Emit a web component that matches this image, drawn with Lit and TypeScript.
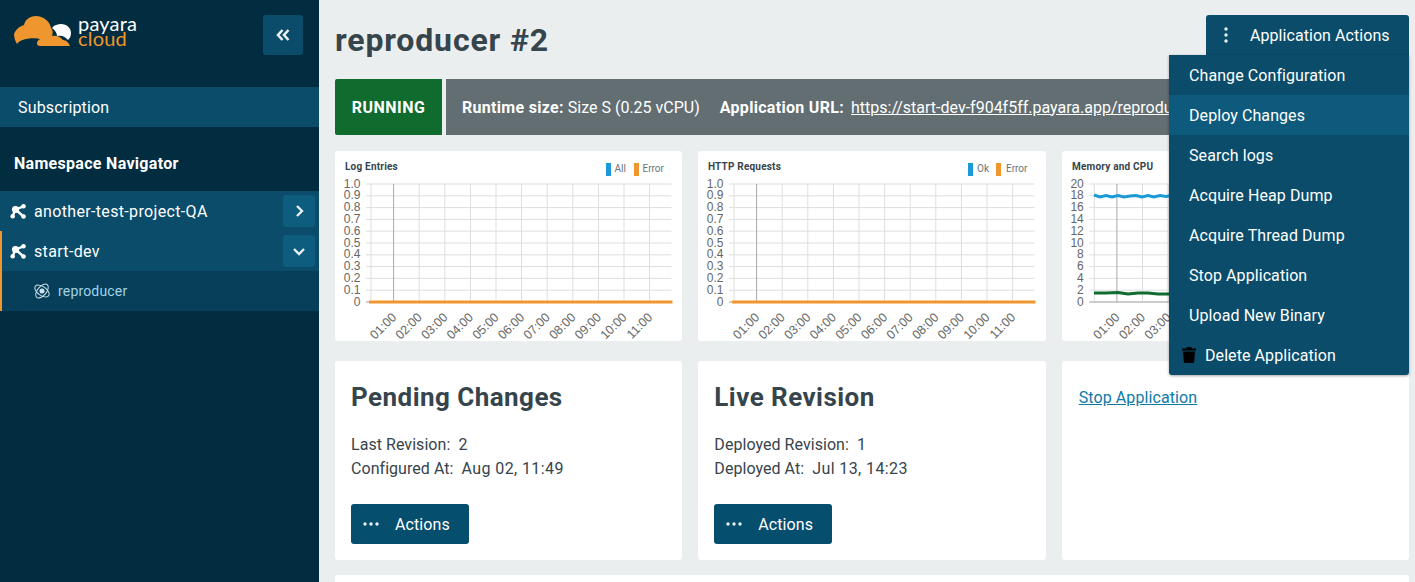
import { LitElement, html, svg, css } from 'lit';
import { customElement, property } from 'lit/decorators.js';

const TIMES = ['01:00', '02:00', '03:00', '04:00', '05:00', '06:00', '07:00', '08:00', '09:00', '10:00', '11:00'];

const clusterIcon = html`<svg class="cluster" viewBox="0 0 16 16" width="16" height="16">
  <path d="M5.500 6.500L2.700 13M5.500 6.500L13.500 3.300M5.500 6.500L13.500 13.500" stroke="currentColor" stroke-width="2.400" fill="none"/>
  <circle cx="5.500" cy="6.500" r="3.600" fill="currentColor"/>
  <circle cx="2.700" cy="13.300" r="2.300" fill="currentColor"/>
  <circle cx="13.500" cy="3.300" r="2.300" fill="currentColor"/>
  <circle cx="13.500" cy="13.500" r="2.300" fill="currentColor"/>
</svg>`;

const atomIcon = html`<svg viewBox="0 0 18 18" width="18" height="18" fill="none" stroke="#cfe3ec" stroke-width="1">
  <ellipse cx="9" cy="9" rx="8.200" ry="4.400" transform="rotate(35 9 9)"/>
  <ellipse cx="9" cy="9" rx="8.200" ry="4.400" transform="rotate(-50 9 9)"/>
  <circle cx="9" cy="9" r="2.500" fill="#cfe3ec" stroke="none"/>
</svg>`;

@customElement('usage-chart')
class UsageChart extends LitElement {
  @property() title = '';
  @property({ type: Array }) legend: string[] = [];
  @property({ type: Array }) labels: string[] = [];
  @property({ type: Number }) startX = 36;
  @property({ type: Boolean }) live = false;

  static styles = css`
    :host { display: block; background: #fff; border-radius: 3px; height: 190px; overflow: hidden; }
    svg { display: block; }
    text { font-family: 'Liberation Sans', Arial, sans-serif; }
    .title { font-family: Roboto, sans-serif; font-size: 10px; font-weight: 700; fill: #36444c; letter-spacing: .2px; }
    .leg { font-family: Roboto, sans-serif; font-size: 10px; fill: #6b7478; }
    .ylab { font-size: 12px; fill: #666; text-anchor: end; }
    .xlab { font-size: 12.500px; fill: #666; text-anchor: end; }
  `;

  render() {
    const x0 = this.startX;
    const top = 33;
    const bottom = 151;
    const step = (bottom - top) / (this.labels.length - 1);
    const tickAt = (i: number) => x0 + 22.6 + i * 25.6;
    const right = x0 + 300.5;
    const first = this.legend[0] === 'All';
    return html`<svg width="347" height="190">
      <text class="title" x="10" y="19">${this.title}</text>
      ${this.legend.length ? svg`
        <rect x="${first ? 271 : 270}" y="12" width="5" height="13" fill="#1b9ad6"/>
        <text class="leg" x="${first ? 279.500 : 279}" y="21">${this.legend[0]}</text>
        <rect x="${first ? 299 : 298}" y="12" width="5" height="13" fill="#f0962e"/>
        <text class="leg" x="${first ? 307.500 : 308}" y="21">Error</text>` : ''}
      ${this.labels.map((l, i) => svg`
        <line x1="${x0 - 5}" x2="${right}" y1="${top + i * step}" y2="${top + i * step}" stroke="#dedede"/>
        <text class="ylab" x="${x0 - 10.500}" y="${top + i * step + 3.500}">${l}</text>`)}
      <line x1="${x0}" x2="${x0}" y1="${top}" y2="${bottom}" stroke="#dedede"/>
      ${TIMES.map((t, i) => svg`
        <line x1="${tickAt(i)}" x2="${tickAt(i)}" y1="${top}" y2="${bottom}" stroke="${i === 0 ? '#a8a8a8' : '#dedede'}"/>
        <text class="xlab" transform="translate(${tickAt(i) + 3.500} ${bottom + 16}) rotate(-45)">${t}</text>`)}
      <line x1="${x0 - 5}" x2="${right}" y1="${bottom}" y2="${bottom}" stroke="#aaa"/>
      ${this.live ? svg`
        <polyline fill="none" stroke="#1b9ad6" stroke-width="3" points="32,44 38,46 44,44.500 50,46 56,44.500 62,46 68,45 74,44.500 80,46 86,44.500 92,46 98,44.500 104,45.500 110,44.500"/>
        <polyline fill="none" stroke="#0f6b2e" stroke-width="3" points="32,142 44,142 56,141.500 66,143 76,142 86,142 96,143 110,143"/>
      ` : svg`
        <line x1="${x0 - 2}" x2="${right + 1}" y1="${bottom}" y2="${bottom}" stroke="#f0962e" stroke-width="3"/>`}
    </svg>`;
  }
}

@customElement('app-root')
class AppRoot extends LitElement {
  static styles = css`
    :host {
      display: flex; height: 582px; overflow: hidden; position: relative;
      font-family: Roboto, sans-serif; font-size: 16px; color: #36444c; background: #ebeeef;
    }
    a { color: inherit; }
    button { font: inherit; color: inherit; border: 0; cursor: pointer; }

    .side { width: 319px; flex: none; background: #022c3f; color: #fff; }
    .brand { height: 87px; box-sizing: border-box; padding: 15px 16px 0 14px; display: flex; justify-content: space-between; align-items: flex-start; }
    .logo { display: flex; gap: 7px; }
    .logo-text { display: flex; flex-direction: column; font-family: Lato, sans-serif; font-weight: 400; font-size: 20px; line-height: 15px; margin-top: 1px; letter-spacing: .2px; }
    .logo-text span:last-child { color: #f0962e; }
    .collapse { width: 40px; height: 40px; border-radius: 3px; background: #0a4c6a; display: grid; place-items: center; padding: 0; }
    .sub { height: 40px; background: #0a4c6a; display: flex; align-items: center; padding-left: 18px; letter-spacing: .17px; }
    .nav-title { height: 64px; box-sizing: border-box; padding: 8px 0 0 14px; display: flex; align-items: center; font-weight: 700; letter-spacing: .3px; }
    .row { height: 40px; background: #0a4c6a; display: flex; align-items: center; padding: 0 4px 0 10px; gap: 8px; letter-spacing: .34px; }
    .row .name { flex: 1; }
    .row.open { border-left: 2px solid #f0962e; padding-left: 8px; }
    .chev { width: 32px; height: 32px; border-radius: 3px; background: #0e5c7e; display: grid; place-items: center; padding: 0; }
    .child { height: 40px; box-sizing: border-box; padding: 0 0 1px 31px; background: #073f5a; border-left: 2px solid #f0962e; display: flex; align-items: center; gap: 7px; font-size: 14px; color: #9fd3e6; letter-spacing: .17px; }

    .main { flex: 1; min-width: 0; padding: 0 6px 0 16px; }
    .top { height: 79px; display: flex; align-items: flex-start; justify-content: space-between; }
    h1 { margin: 20px 0 0; font-size: 32px; line-height: 40px; font-weight: 700; letter-spacing: .85px; }
    .app-actions { width: 203px; height: 40px; margin-top: 15px; background: #0a4c6a; color: #fff; border-radius: 3px 3px 0 0; display: flex; align-items: center; padding: 0 0 0 17px; gap: 21px; letter-spacing: .06px; }

    .status { display: flex; gap: 4px; height: 56px; }
    .running { width: 107px; flex: none; background: #0f6b2e; color: #fff; font-weight: 700; display: grid; place-items: center; letter-spacing: .5px; border-radius: 2px 0 0 2px; }
    .info { flex: 1; min-width: 0; background: #626e72; color: #fff; display: flex; align-items: center; padding-left: 16px; gap: 20px; white-space: nowrap; overflow: hidden; }
    .info b { font-weight: 700; letter-spacing: .3px; }
    .info a { margin-left: 3px; }

    .charts, .cards { display: grid; grid-template-columns: repeat(3, 1fr); gap: 16px; }
    .charts { margin-top: 16px; }
    .cards { margin-top: 20px; }
    .card { height: 199px; box-sizing: border-box; background: #fff; border-radius: 3px; padding: 16px; }
    .card h2 { margin: 3px 0 19px; font-size: 26px; line-height: 34px; font-weight: 700; letter-spacing: .45px; }
    .card p { margin: 0; line-height: 24px; letter-spacing: .05px; }
    .card p span { letter-spacing: .4px; }
    .act { margin-top: 23px; width: 118px; height: 40px; border-radius: 3px; background: #064e6e; color: #fff; display: flex; align-items: center; padding: 0 0 0 12px; gap: 16px; letter-spacing: .08px; }
    .link { color: #0f7aa8; letter-spacing: .1px; display: inline-block; margin: 11px 0 0 1px; }
    .more { margin-top: 15px; height: 40px; background: #fff; border-radius: 3px; }

    .menu { position: absolute; left: 1169px; top: 55px; width: 240px; background: #0a4c6a; color: #fff; border-radius: 0 0 3px 3px; box-shadow: 0 1px 3px rgba(0,0,0,.35); }
    .menu div { height: 40px; display: flex; align-items: center; padding-left: 20px; letter-spacing: .08px; }
    .menu div.hot { background: #0e5a7c; }
    .menu div.del { padding-left: 13px; gap: 9px; }
  `;

  render() {
    const dots = html`<svg width="16" height="4" viewBox="0 0 16 4" fill="#e8f1f5"><circle cx="2" cy="2" r="1.700"/><circle cx="8" cy="2" r="1.700"/><circle cx="14" cy="2" r="1.700"/></svg>`;
    return html`
      <aside class="side">
        <div class="brand">
          <div class="logo">
            <svg width="57" height="32" viewBox="14 14 57 32">
              <path fill="#f0962e" d="M14 33C16 28 20 25 24 24C25 18 31 15 36 15C43 15 50 20 51 27C53 29 53 32 52 35C56 34 60 35 63 39C66 39 69 42 70 45L40 45C36 45 36 40 40 38C37 37 30 37 26 38C22 39 19 40 17 43C15 40 14 36 14 33Z"/>
              <path fill="#fff" d="M52 27C54 24 58 23 61 23C67 23 71 27 71 32C71 35 70 37 68 39C65 35 61 34 57 35C57 32 55 29 52 27Z"/>
            </svg>
            <div class="logo-text"><span>payara</span><span>cloud</span></div>
          </div>
          <button class="collapse" aria-label="Collapse">
            <svg width="14" height="12" viewBox="0 0 14 12" fill="none" stroke="#e8f1f5" stroke-width="2.600"><path d="M6.500 1L2 6l4.500 5M12.500 1L8 6l4.500 5"/></svg>
          </button>
        </div>
        <div class="sub">Subscription</div>
        <div class="nav-title">Namespace Navigator</div>
        <div class="row">${clusterIcon}<span class="name">another-test-project-QA</span>
          <button class="chev" aria-label="Expand"><svg width="9" height="12" viewBox="0 0 9 12" fill="none" stroke="#e8f1f5" stroke-width="2.400"><path d="M2 1l5 5-5 5"/></svg></button>
        </div>
        <div class="row open">${clusterIcon}<span class="name">start-dev</span>
          <button class="chev" aria-label="Collapse"><svg width="12" height="9" viewBox="0 0 12 9" fill="none" stroke="#e8f1f5" stroke-width="2.400"><path d="M1 2l5 5 5-5"/></svg></button>
        </div>
        <div class="child">${atomIcon}<span>reproducer</span></div>
      </aside>

      <main class="main">
        <div class="top">
          <h1>reproducer #2</h1>
          <button class="app-actions">
            <svg width="6" height="16" viewBox="0 0 6 16" fill="#e8f1f5"><circle cx="3" cy="2" r="1.700"/><circle cx="3" cy="8" r="1.700"/><circle cx="3" cy="14" r="1.700"/></svg>
            <span>Application Actions</span>
          </button>
        </div>
        <div class="status">
          <div class="running">RUNNING</div>
          <div class="info">
            <span><b>Runtime size:</b> Size S (0.25 vCPU)</span>
            <span><b>Application URL:</b> <a href="#">https://start-dev-f904f5ff.payara.app/reproducer</a></span>
          </div>
        </div>
        <div class="charts">
          <usage-chart title="Log Entries" .legend=${['All', 'Error']} .labels=${['1.0', '0.9', '0.8', '0.7', '0.6', '0.5', '0.4', '0.3', '0.2', '0.1', '0']}></usage-chart>
          <usage-chart title="HTTP Requests" .legend=${['Ok', 'Error']} .labels=${['1.0', '0.9', '0.8', '0.7', '0.6', '0.5', '0.4', '0.3', '0.2', '0.1', '0']}></usage-chart>
          <usage-chart title="Memory and CPU" live .startX=${32.3} .labels=${['20', '18', '16', '14', '12', '10', '8', '6', '4', '2', '0']}></usage-chart>
        </div>
        <div class="cards">
          <section class="card">
            <h2>Pending Changes</h2>
            <p>Last Revision:&nbsp; <span>2</span></p>
            <p>Configured At:&nbsp; <span>Aug 02, 11:49</span></p>
            <button class="act">${dots}<span>Actions</span></button>
          </section>
          <section class="card">
            <h2>Live Revision</h2>
            <p>Deployed Revision:&nbsp; <span>1</span></p>
            <p>Deployed At:&nbsp; <span>Jul 13, 14:23</span></p>
            <button class="act">${dots}<span>Actions</span></button>
          </section>
          <section class="card"><a class="link" href="#">Stop Application</a></section>
        </div>
        <div class="more"></div>
      </main>

      <nav class="menu">
        <div>Change Configuration</div>
        <div class="hot">Deploy Changes</div>
        <div>Search logs</div>
        <div>Acquire Heap Dump</div>
        <div>Acquire Thread Dump</div>
        <div>Stop Application</div>
        <div>Upload New Binary</div>
        <div class="del">
          <svg width="14" height="16" viewBox="0 0 14 16" fill="#000"><path d="M5 0h4l1 1.500h4V3.500H0V1.500h4zM1 4.500h12l-.8 10.200a1.400 1.400 0 0 1-1.400 1.300H3.200a1.400 1.400 0 0 1-1.400-1.300z"/></svg>
          <span>Delete Application</span>
        </div>
      </nav>
    `;
  }
}
